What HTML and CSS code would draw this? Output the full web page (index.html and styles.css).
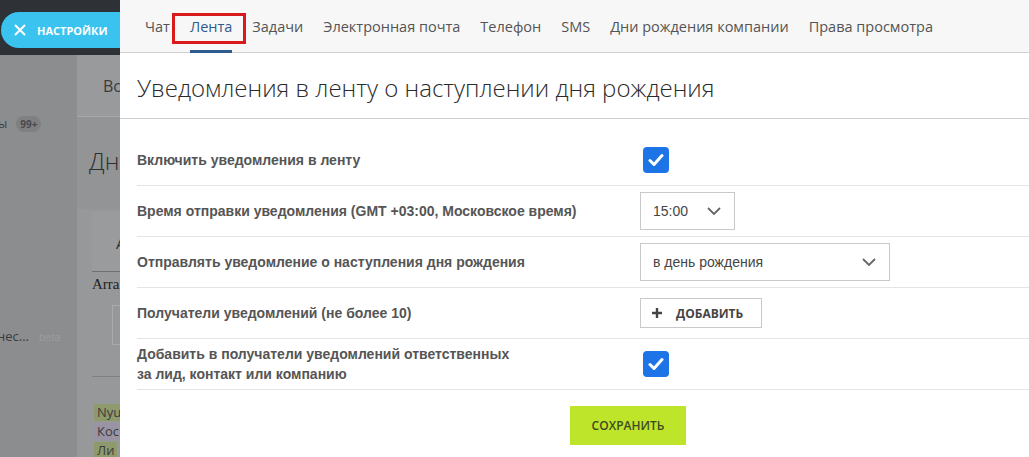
FILE: index.html
```html
<!DOCTYPE html>
<html lang="ru">
<head>
<meta charset="utf-8">
<title>Уведомления</title>
<link rel="stylesheet" href="styles.css">
</head>
<body>
<div class="backdrop">
  <div class="bd-top">
    <div class="pill">
      <svg class="pill-x" width="12" height="12" viewBox="0 0 12 12"><path d="M1.5 1.5 L10.5 10.5 M10.5 1.5 L1.5 10.5" stroke="#fff" stroke-width="2" stroke-linecap="round"/></svg>
      <span>НАСТРОЙКИ</span>
    </div>
  </div>
  <div class="bd-main">
    <div class="bd-side">
      <div class="bd-counter"><span class="bd-cut">ы</span><span class="bd-badge">99+</span></div>
      <div class="bd-beta"><span class="bd-cut2">нес...</span><span class="bd-betatag">beta</span></div>
    </div>
    <div class="bd-content">
      <div class="bd-head">Вс</div>
      <div class="bd-title">Дн</div>
      <div class="bd-card">
        <div class="bd-cardhead">A</div>
        <div class="bd-serif">Arra</div>
        <div class="bd-input"></div>
        <div class="bd-rule"></div>
        <div class="bd-tags">
          <span class="tag tag-g">Nyu</span>
          <span class="tag tag-p">Кос</span>
          <span class="tag tag-g">Ли</span>
        </div>
      </div>
    </div>
  </div>
</div>

<div class="panel">
  <nav class="tabs">
    <span class="tab">Чат</span>
    <span class="tab tab-active">Лента<span class="mark"></span></span>
    <span class="tab">Задачи</span>
    <span class="tab">Электронная почта</span>
    <span class="tab">Телефон</span>
    <span class="tab">SMS</span>
    <span class="tab">Дни рождения компании</span>
    <span class="tab">Права просмотра</span>
  </nav>
  <h1 class="title">Уведомления в ленту о наступлении дня рождения</h1>
  <div class="form">
    <div class="row">
      <div class="label">Включить уведомления в ленту</div>
      <div class="ctrl"><span class="check"><svg width="16" height="14" viewBox="0 0 16 14"><path d="M2 7.5 L6 11.5 L14 2.5" fill="none" stroke="#fff" stroke-width="3" stroke-linecap="round" stroke-linejoin="round"/></svg></span></div>
    </div>
    <div class="row">
      <div class="label">Время отправки уведомления (GMT +03:00, Московское время)</div>
      <div class="ctrl"><div class="select select-s"><span>15:00</span><svg width="14" height="8" viewBox="0 0 14 8"><path d="M1 1 L7 7 L13 1" fill="none" stroke="#666" stroke-width="1.8"/></svg></div></div>
    </div>
    <div class="row">
      <div class="label">Отправлять уведомление о наступления дня рождения</div>
      <div class="ctrl"><div class="select select-l"><span>в день рождения</span><svg width="14" height="8" viewBox="0 0 14 8"><path d="M1 1 L7 7 L13 1" fill="none" stroke="#666" stroke-width="1.8"/></svg></div></div>
    </div>
    <div class="row">
      <div class="label">Получатели уведомлений (не более 10)</div>
      <div class="ctrl"><button class="add"><svg width="10" height="10" viewBox="0 0 10 10"><path d="M5 0 V10 M0 5 H10" stroke="#444" stroke-width="2.4"/></svg><span>ДОБАВИТЬ</span></button></div>
    </div>
    <div class="row">
      <div class="label">Добавить в получатели уведомлений ответственных<br>за лид, контакт или компанию</div>
      <div class="ctrl"><span class="check"><svg width="16" height="14" viewBox="0 0 16 14"><path d="M2 7.5 L6 11.5 L14 2.5" fill="none" stroke="#fff" stroke-width="3" stroke-linecap="round" stroke-linejoin="round"/></svg></span></div>
    </div>
  </div>
  <div class="actions"><button class="save">СОХРАНИТЬ</button></div>
</div>
</body>
</html>
```
FILE: styles.css
```css
* { box-sizing: border-box; }
html, body { margin: 0; padding: 0; }
body {
  display: flex;
  width: 1029px;
  height: 457px;
  overflow: hidden;
  font-family: "Open Sans", "Liberation Sans", sans-serif;
  background: #fff;
}

/* ---------- dimmed page behind the panel ---------- */
.backdrop {
  width: 120px;
  flex: none;
  height: 457px;
  overflow: hidden;
  display: flex;
  flex-direction: column;
  background: #8d8e90;
}
.bd-top {
  height: 55px;
  flex: none;
  background: #2e3237;
  padding-top: 12px;
  padding-left: 1px;
}
.pill {
  width: 160px;
  height: 36px;
  border-radius: 18px;
  background: #3bc3ef;
  display: flex;
  align-items: center;
  padding-left: 13px;
  color: #fff;
  font-weight: 700;
  font-size: 11px;
}
.pill-x { margin-right: 11px; }
.bd-main {
  flex: 1;
  display: flex;
}
.bd-side {
  width: 77px;
  flex: none;
  background: #8c8d8f;
}
.bd-counter {
  display: flex;
  align-items: center;
  margin-top: 60px;
  margin-left: -2px;
  font-size: 12px;
  color: #3f4043;
}
.bd-badge {
  margin-left: 9px;
  background: #7f8082;
  color: #4a4b4d;
  font-size: 10px;
  font-weight: 700;
  border-radius: 8px;
  padding: 1px 4px;
}
.bd-beta {
  margin-top: 195px;
  display: flex;
  align-items: baseline;
  margin-left: -3px;
}
.bd-cut2 { font-size: 13px; color: #3b3c3e; }
.bd-betatag { font-size: 11px; color: #9c9c9d; margin-left: 10px; font-family: "Liberation Sans", sans-serif; }
.bd-content {
  flex: 1;
  background: #939496;
  display: flex;
  flex-direction: column;
}
.bd-head {
  height: 62px;
  background: #999a9c;
  border-bottom: 1px solid #a7a8aa;
  font-size: 16px;
  color: #3a3b3d;
  padding-left: 26px;
  line-height: 62px;
}
.bd-title {
  font-size: 24px;
  font-weight: 300;
  color: #2e2f31;
  padding-left: 12px;
  margin-top: 29px;
  line-height: 30px;
}
.bd-card {
  margin-top: 33px;
  background: #97989a;
  padding-top: 3px;
  padding-left: 15px;
  flex: 1;
}
.bd-cardhead {
  height: 60px;
  background: #9a9b9d;
  border-bottom: 1px solid #6f7072;
  font-size: 15px;
  color: #2e2f31;
  padding-left: 24px;
  line-height: 62px;
}
.bd-serif {
  font-family: "Liberation Serif", serif;
  font-size: 15px;
  color: #1f1f20;
  margin-top: 4px;
}
.bd-input {
  margin-top: 12px;
  margin-left: 20px;
  height: 40px;
  border: 1px solid #a9aaac;
  border-right: none;
  background: #97989a;
}
.bd-rule {
  margin-top: 31px;
  border-top: 1px solid #7f8082;
}
.bd-tags {
  margin-top: 27px;
  display: flex;
  flex-direction: column;
  align-items: flex-start;
  gap: 2px;
  padding-left: 2px;
}
.tag {
  font-size: 13px;
  line-height: 17px;
  color: #3a3b3d;
  padding: 0 3px;
}
.tag-g { background: #8f9a6c; }
.tag-p { background: #9a93a4; }

/* ---------- panel ---------- */
.panel {
  flex: 1;
  display: flex;
  flex-direction: column;
  background: #fff;
}
.tabs {
  height: 53px;
  flex: none;
  background: #f7f7f7;
  border-bottom: 1px solid #cfcfcf;
  display: flex;
  align-items: stretch;
  gap: 20px;
  padding-left: 25px;
}
.tab {
  position: relative;
  font-size: 14.5px;
  color: #545454;
  line-height: 53px;
}
.tab-active {
  color: #2f5a8e;
}
.tab-active::after {
  content: "";
  position: absolute;
  left: 0;
  right: 0;
  bottom: -1px;
  height: 3px;
  background: #2f5a8e;
}
.mark {
  position: absolute;
  left: -18px;
  right: -14px;
  top: 13px;
  height: 31px;
  border: 3px solid #d81a1a;
}
.title {
  margin: 0;
  padding: 18px 17px 13px;
  font-size: 24px;
  line-height: 34px;
  font-weight: 300;
  color: #2b2b2b;
  border-bottom: 1px solid #cfcfcf;
}
.form {
  padding-top: 16px;
  margin-left: 17px;
}
.row {
  display: grid;
  grid-template-columns: 503px 1fr;
  align-items: center;
  min-height: 51px;
  border-bottom: 1px solid #e4e4e4;
}
.label {
  font-family: "Liberation Sans", Arial, sans-serif;
  font-weight: 700;
  font-size: 14px;
  line-height: 20px;
  color: #555;
}
.ctrl { display: flex; align-items: center; }
.check {
  width: 26px;
  height: 26px;
  margin-left: 3px;
  border-radius: 4px;
  background: #1c74e6;
  display: flex;
  align-items: center;
  justify-content: center;
}
.select {
  height: 38px;
  border: 1px solid #c9c9c9;
  display: flex;
  align-items: center;
  justify-content: space-between;
  padding: 0 13px 0 12px;
  font-family: "Liberation Sans", Arial, sans-serif;
  font-size: 14px;
  color: #454545;
}
.select-s { width: 95px; }
.select-l { width: 250px; }
.add {
  height: 30px;
  width: 122px;
  border: 1px solid #c9c9c9;
  background: #fff;
  display: flex;
  align-items: center;
  padding: 0 0 0 11px;
  gap: 14px;
  font-family: "Open Sans", sans-serif;
  font-weight: 700;
  font-size: 12px;
  color: #444;
}
.actions {
  padding-left: 450px;
  padding-top: 16px;
}
.save {
  width: 116px;
  height: 39px;
  border: none;
  background: #bfe52a;
  font-family: "Open Sans", sans-serif;
  font-weight: 600;
  font-size: 12px;
  color: #3d4a24;
}
```
